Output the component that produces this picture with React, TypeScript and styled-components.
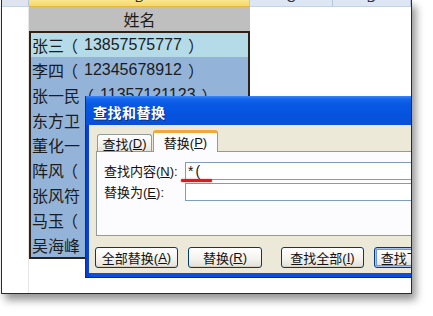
import React from "react";
import styled, { createGlobalStyle } from "styled-components";

const Global = createGlobalStyle`
  html, body { margin: 0; padding: 0; background: #ffffff; }
  body {
    width: 433px; height: 316px; overflow: hidden;
    font-family: "Liberation Sans", "Noto Sans CJK SC", sans-serif;
    color: #111;
  }
`;

const Page = styled.div`
  width: 433px;
  height: 316px;
  padding-left: 1px;
  box-sizing: border-box;
`;

const Frame = styled.div`
  position: relative;
  width: 411px;
  height: 294px;
  box-sizing: border-box;
  border: 1px solid #2a2a2a;
  border-top: none;
  background: #fff;
  overflow: hidden;
  box-shadow: 4px 6px 8px rgba(0, 0, 0, 0.42);
`;

const Sheet = styled.div`
  display: grid;
  grid-template-columns: 27px 221px 83px 1fr;
  grid-template-rows: 7px 24px 228px 1fr;
  height: 100%;
`;

const ColHeader = styled.div<{ $kind: "corner" | "selected" | "normal" }>`
  overflow: hidden;
  display: flex;
  justify-content: center;
  align-items: flex-end;
  box-sizing: border-box;
  background: ${(p) =>
    p.$kind === "selected"
      ? "linear-gradient(#fbe68e, #f6d86a)"
      : p.$kind === "corner"
      ? "#dfe4ef"
      : "#dde7f4"};
  border-right: 1px solid ${(p) => (p.$kind === "selected" ? "#f2c84e" : "#b8c6da")};
  border-bottom: 1px solid ${(p) => (p.$kind === "selected" ? "#e9b53c" : "#c5d2e4")};
  font-size: 13px;
  color: #333;
`;

const ColLetter = styled.span`
  line-height: 14px;
  padding-bottom: 1px;
`;

const RowHeaderCol = styled.div`
  grid-column: 1;
  grid-row: 2 / 5;
  background: #fff;
  border-right: 1px solid #e6e6e6;
`;

const EmptyArea = styled.div`
  grid-column: 3 / 5;
  grid-row: 2 / 5;
  background: #fff;
`;

const TitleCell = styled.div`
  grid-column: 2;
  grid-row: 2;
  background: #bfbfbf;
  display: flex;
  align-items: center;
  justify-content: center;
  font-size: 16px;
  font-family: "Noto Sans CJK SC", sans-serif;
  color: #1a1a1a;
`;

const DataBlock = styled.div`
  grid-column: 2;
  grid-row: 3;
  border: 2px solid #2e2119;
  display: flex;
  flex-direction: column;
  overflow: hidden;
`;

const DataRow = styled.div<{ $first?: boolean }>`
  height: ${(p) => (p.$first ? 24 : 25)}px;
  flex: none;
  background: ${(p) => (p.$first ? "#b4dbe7" : "#94b3d8")};
  display: flex;
  align-items: center;
  padding-left: 1px;
  font-size: 16px;
  white-space: nowrap;
  color: #1b1b22;
`;

const Name = styled.span`
  font-family: "Noto Sans CJK SC", sans-serif;
`;

const Paren = styled.span`
  display: inline-block;
  width: 20px;
  text-align: center;
  font-family: "Noto Sans CJK SC", sans-serif;
  font-feature-settings: "halt";
`;

const Digits = styled.span`
  font-family: "Liberation Sans", sans-serif;
`;

const BelowArea = styled.div`
  grid-column: 2;
  grid-row: 4;
  background: #fff;
`;

/* ---------- dialog ---------- */

const Dialog = styled.div`
  position: absolute;
  left: 83px;
  top: 96px;
  width: 340px;
  display: flex;
  flex-direction: column;
  background: linear-gradient(90deg, #0a3cc8, #0b4fdc 6px);
  border-left: 1px solid #0a2f9c;
  border-bottom: 1px solid #0a2782;
  font-family: "Liberation Sans", "Noto Sans CJK SC", sans-serif;
`;

const TitleBar = styled.div`
  height: 29px;
  display: flex;
  align-items: center;
  padding: 2px 0 0 7px;
  box-sizing: border-box;
  background: linear-gradient(
    #3a86f6 0px,
    #1466ee 3px,
    #0859e4 8px,
    #0553dd 20px,
    #0a4fd8 29px
  );
  color: #fff;
  font-family: "Noto Sans CJK SC", sans-serif;
  font-weight: bold;
  font-size: 14px;
  letter-spacing: 0.5px;
  text-shadow: 1px 1px 0 #0a2f8a;
`;

const Body = styled.div`
  margin: 0 0 4px 3px;
  background: #ece9d8;
  padding: 5px 0 5px 7px;
  display: flex;
  flex-direction: column;
`;

const TabRow = styled.div`
  display: flex;
  align-items: flex-end;
  height: 21px;
  padding-left: 1px;
  position: relative;
  z-index: 1;
`;

const Tab = styled.div<{ $active?: boolean; $w: number }>`
  width: ${(p) => p.$w}px;
  box-sizing: border-box;
  height: ${(p) => (p.$active ? 22 : 17)}px;
  margin-bottom: ${(p) => (p.$active ? -1 : 0)}px;
  margin-left: ${(p) => (p.$active ? 1 : 0)}px;
  border: 1px solid #919b9c;
  border-bottom: none;
  border-top: ${(p) => (p.$active ? "3px solid #f2a93b" : "1px solid #919b9c")};
  border-radius: 3px 3px 0 0;
  background: ${(p) => (p.$active ? "#fcfcfe" : "linear-gradient(#ffffff, #f1f0ea 70%, #e6e4da)")};
  display: flex;
  align-items: center;
  justify-content: center;
  font-size: 13px;
  color: #111;
  white-space: nowrap;
`;

const Panel = styled.div`
  height: 85px;
  box-sizing: border-box;
  border: 1px solid #919b9c;
  border-right: none;
  background: #fcfcfe;
  padding: 9px 0 0 7px;
  display: flex;
  flex-direction: column;
  gap: 3px;
`;

const FieldRow = styled.div`
  display: grid;
  grid-template-columns: 81px 1fr;
  height: 18px;
  align-items: center;
`;

const Label = styled.span`
  font-size: 13px;
  color: #111;
  white-space: nowrap;
`;

const Input = styled.div`
  height: 18px;
  box-sizing: border-box;
  border: 1px solid #7f9db9;
  border-right: none;
  background: #fff;
  font-size: 14px;
  display: flex;
  align-items: center;
  padding-left: 2px;
  letter-spacing: 2px;
  color: #111;
`;

const ButtonRow = styled.div`
  display: flex;
  margin-top: 11px;
  margin-left: -1px;
`;

const Button = styled.div<{ $w: number; $gap: number; $default?: boolean }>`
  width: ${(p) => p.$w}px;
  flex: none;
  height: 21px;
  margin-left: ${(p) => p.$gap}px;
  box-sizing: border-box;
  border: 1px solid #003c74;
  border-radius: 3px;
  background: linear-gradient(#ffffff, #f4f3ee 55%, #e3e0d6);
  box-shadow: ${(p) =>
    p.$default ? "inset 0 0 0 1px #a9c3f4, inset 0 0 0 2px #6d94e8" : "inset 0 -1px 0 #d6d0c3"};
  display: flex;
  align-items: center;
  justify-content: center;
  font-size: 13px;
  color: #111;
  white-space: nowrap;
  overflow: hidden;
`;

const RedMark = styled.div`
  position: absolute;
  left: 95px;
  top: 83px;
  width: 31px;
  height: 3px;
  border-radius: 1px;
  background: #e3171c;
  box-shadow: 0 0 2px rgba(220, 20, 20, 0.55);
`;

const Key = styled.u`
  text-underline-offset: 1px;
`;

const rows: [string, string][] = [
  ["张三", "13857575777"],
  ["李四", "12345678912"],
  ["张一民", "11357121123"],
  ["东方卫", "13957121234"],
  ["董化一", "13812345678"],
  ["阵风", "13712345678"],
  ["张风符", "13612345678"],
  ["马玉", "13512345678"],
  ["吴海峰", "13412345678"],
];

const Acc = ({ text, k }: { text: string; k: string }) => (
  <>
    {text}(<Key>{k}</Key>)
  </>
);

export default function App() {
  return (
    <>
      <Global />
      <Page>
        <Frame>
          <Sheet>
            <ColHeader $kind="corner" />
            <ColHeader $kind="selected">
              <ColLetter>B</ColLetter>
            </ColHeader>
            <ColHeader $kind="normal">
              <ColLetter>C</ColLetter>
            </ColHeader>
            <ColHeader $kind="normal">
              <ColLetter>D</ColLetter>
            </ColHeader>
            <RowHeaderCol />
            <TitleCell>姓名</TitleCell>
            <EmptyArea />
            <DataBlock>
              {rows.map(([name, phone], i) => (
                <DataRow key={name} $first={i === 0}>
                  <Name>{name}</Name>
                  <Paren>（</Paren>
                  <Digits>{phone}</Digits>
                  <Paren>）</Paren>
                </DataRow>
              ))}
            </DataBlock>
            <BelowArea />
          </Sheet>

          <Dialog>
            <TitleBar>查找和替换</TitleBar>
            <Body>
              <TabRow>
                <Tab $w={55}>
                  <Acc text="查找" k="D" />
                </Tab>
                <Tab $w={65} $active>
                  <Acc text="替换" k="P" />
                </Tab>
              </TabRow>
              <Panel>
                <FieldRow>
                  <Label>
                    <Acc text="查找内容" k="N" />:
                  </Label>
                  <Input>*(</Input>
                </FieldRow>
                <FieldRow>
                  <Label>
                    <Acc text="替换为" k="E" />:
                  </Label>
                  <Input />
                </FieldRow>
              </Panel>
              <ButtonRow>
                <Button $w={83} $gap={0}>
                  <Acc text="全部替换" k="A" />
                </Button>
                <Button $w={74} $gap={10}>
                  <Acc text="替换" k="R" />
                </Button>
                <Button $w={83} $gap={19}>
                  <Acc text="查找全部" k="I" />
                </Button>
                <Button $w={95} $gap={10} $default>
                  <Acc text="查找下一个" k="F" />
                </Button>
              </ButtonRow>
            </Body>
            <RedMark />
          </Dialog>
        </Frame>
      </Page>
    </>
  );
}
